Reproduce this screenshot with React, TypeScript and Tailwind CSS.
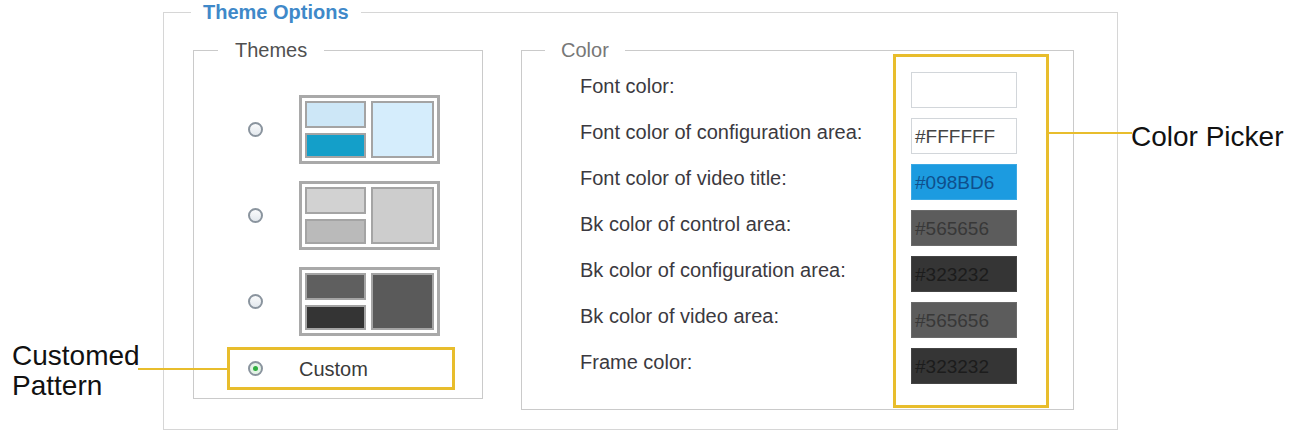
import React from 'react';

type Preview = {
  topLeft: string;
  bottomLeft: string;
  right: string;
};

const previews: Preview[] = [
  { topLeft: 'bg-[#cde7f7]', bottomLeft: 'bg-[#149fc9]', right: 'bg-[#d5edfc]' },
  { topLeft: 'bg-[#d2d2d2]', bottomLeft: 'bg-[#bababa]', right: 'bg-[#cdcdcd]' },
  { topLeft: 'bg-[#5f5f5f]', bottomLeft: 'bg-[#343434]', right: 'bg-[#5a5a5a]' },
];

const colorRows = [
  { label: 'Font color:', value: '', box: 'bg-white border-[#d2d6da] text-[#444]' },
  { label: 'Font color of configuration area:', value: '#FFFFFF', box: 'bg-white border-[#d2d6da] text-[#444]' },
  { label: 'Font color of video title:', value: '#098BD6', box: 'bg-[#1c9be0] border-[#3aa8e4] text-[#0f4f8c]' },
  { label: 'Bk color of control area:', value: '#565656', box: 'bg-[#5c5c5c] border-[#6a6a6a] text-[#383838]' },
  { label: 'Bk color of configuration area:', value: '#323232', box: 'bg-[#353535] border-[#444] text-[#1c1c1c]' },
  { label: 'Bk color of video area:', value: '#565656', box: 'bg-[#5c5c5c] border-[#6a6a6a] text-[#383838]' },
  { label: 'Frame color:', value: '#323232', box: 'bg-[#353535] border-[#444] text-[#1c1c1c]' },
];

const Radio = ({ checked }: { checked?: boolean }) => (
  <div
    className={`w-[15px] h-[15px] shrink-0 rounded-full border-2 border-[#8a949e] flex items-center justify-center ${
      checked ? 'bg-[#e4f3e6]' : 'bg-gradient-to-b from-[#fafbfc] to-[#e3e8ed]'
    }`}
  >
    {checked && <div className="w-[5px] h-[5px] rounded-full bg-[#2fae3f]" />}
  </div>
);

const ThemePreview = ({ p }: { p: Preview }) => (
  <div className="w-[141px] h-[69px] border-[3px] border-[#a9a9a9] bg-white p-[3px] flex gap-[5px]">
    <div className="w-[61px] flex flex-col gap-[5px]">
      <div className={`h-[27px] border-2 border-[#a4a4a4] ${p.topLeft}`} />
      <div className={`flex-1 border-2 border-[#a4a4a4] ${p.bottomLeft}`} />
    </div>
    <div className={`flex-1 border-2 border-[#a4a4a4] ${p.right}`} />
  </div>
);

export default function App() {
  return (
    <div
      className="w-[1293px] h-[432px] bg-white flex overflow-hidden"
      style={{ fontFamily: '"Liberation Sans", Arial, sans-serif' }}
    >
      {/* left callout text */}
      <div className="w-[163px] shrink-0 pt-[341px] pl-[12px] text-[28px] leading-[30px] text-[#111]">
        <div>Customed</div>
        <div>Pattern</div>
      </div>

      <fieldset className="w-[955px] h-[430px] shrink-0 border border-[#d6d6d6]">
        <legend className="ml-[27px] px-[12px] text-[20px] leading-[24px] font-bold text-[#3f89c9]">
          Theme Options
        </legend>
        <div className="flex pl-[29px] pt-[14px] gap-[38px]">
          {/* Themes */}
          <fieldset className="w-[290px] h-[361px] shrink-0 border border-[#cacaca]">
            <legend className="ml-[24px] px-[17px] text-[20px] leading-[24px] text-[#505050]">Themes</legend>
            <div className="flex flex-col pt-[33px] gap-[17px]">
              {previews.map((p, i) => (
                <div key={i} className="flex items-center pl-[54px] gap-[36px]">
                  <Radio />
                  <ThemePreview p={p} />
                </div>
              ))}
            </div>
            <div className="relative ml-[33px] mt-[11px] w-[228px] h-[43px] border-[3px] border-[#e8bd2c] flex items-center pl-[18px] gap-[36px]">
              <div className="absolute right-[calc(100%+3px)] top-1/2 -translate-y-1/2 w-[89px] h-[2px] bg-[#e8bd2c]" />
              <Radio checked />
              <span className="text-[20px] leading-[24px] text-[#3a3a3a]">Custom</span>
            </div>
          </fieldset>

          {/* Color */}
          <fieldset className="w-[553px] h-[372px] shrink-0 border border-[#cacaca]">
            <legend className="ml-[23px] px-[16px] text-[20px] leading-[24px] text-[#777]">Color</legend>
            <div className="flex pl-[58px] pt-[1px]">
              <div className="w-[313px] shrink-0 flex flex-col">
                {colorRows.map((r) => (
                  <div key={r.label} className="h-[46px] leading-[46px] text-[20px] text-[#3b3940] whitespace-nowrap">
                    {r.label}
                  </div>
                ))}
              </div>
              <div className="relative -mt-[9px] w-[156px] h-[354px] shrink-0 border-[3px] border-[#e8bd2c] pl-[15px] pt-[15px] flex flex-col gap-[10px]">
                <div className="absolute left-[calc(100%+3px)] top-[75px] w-[83px] h-[2px] bg-[#e8bd2c]" />
                {colorRows.map((r) => (
                  <div
                    key={r.label}
                    className={`w-[106px] h-[36px] border pl-[3px] flex items-center text-[19px] leading-none ${r.box}`}
                  >
                    {r.value}
                  </div>
                ))}
              </div>
            </div>
          </fieldset>
        </div>
      </fieldset>

      {/* right callout text */}
      <div className="flex-1 pt-[121px] pl-[13px] text-[28px] leading-[32px] text-[#111] whitespace-nowrap">
        Color Picker
      </div>
    </div>
  );
}
